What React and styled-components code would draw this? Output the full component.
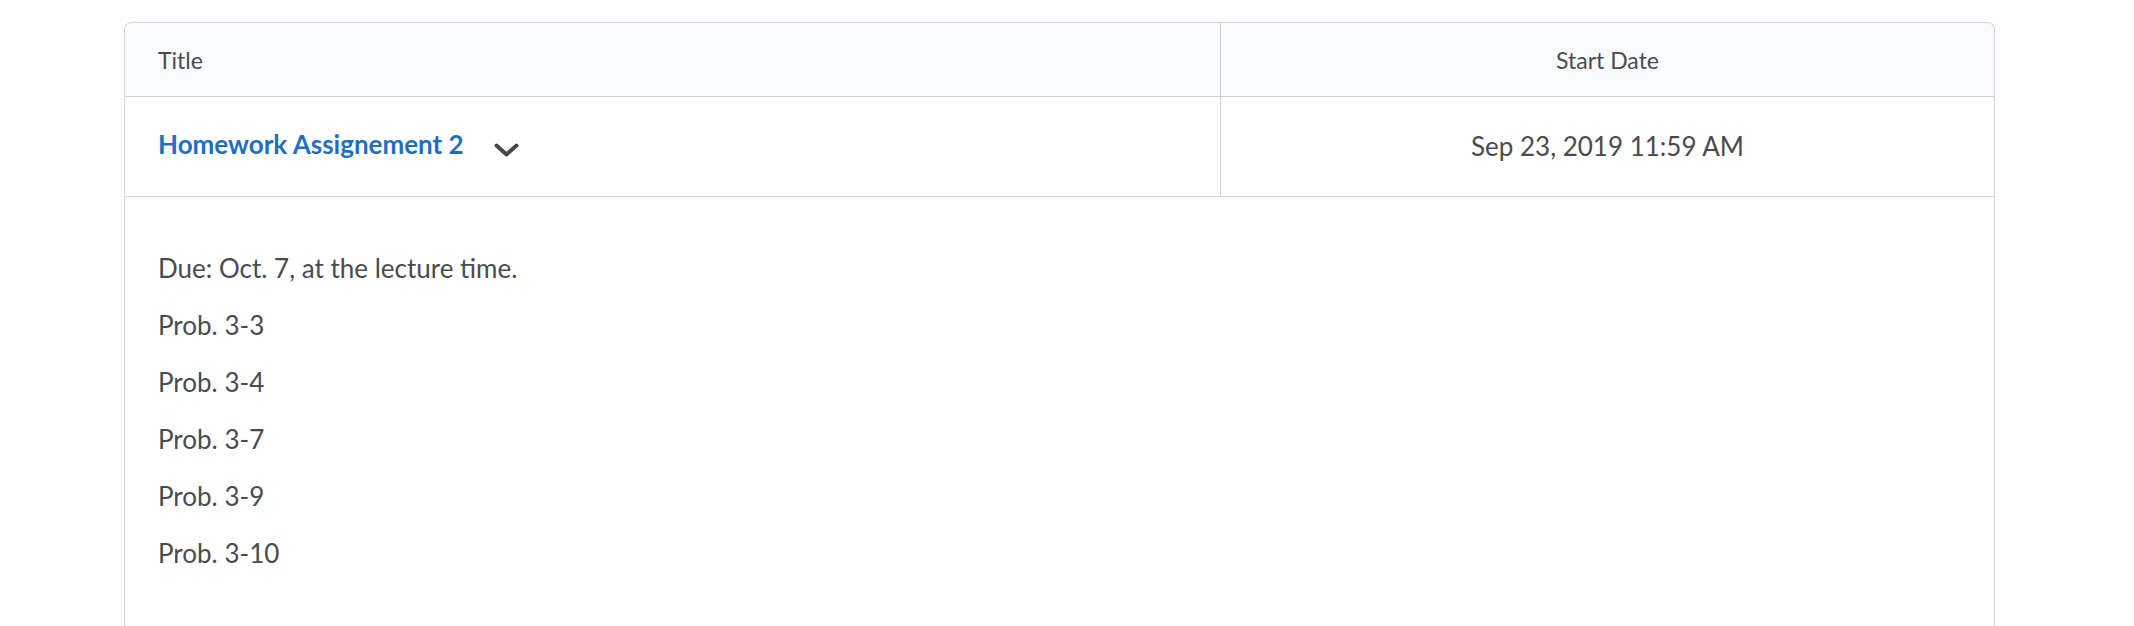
import React from "react";
import styled, { createGlobalStyle } from "styled-components";

const GlobalStyle = createGlobalStyle`
  html, body {
    margin: 0;
    padding: 0;
    background: #ffffff;
  }
  body {
    font-family: Lato, "Noto Sans", "Liberation Sans", sans-serif;
    color: #494c4e;
  }
`;

const Page = styled.div`
  padding: 22px 139px 0 124px;
`;

const Table = styled.div`
  border: 1px solid #cdd4db;
  border-bottom: none;
  border-radius: 8px 8px 0 0;
  overflow: hidden;
  display: grid;
  grid-template-columns: 1096px 1fr;
`;

const HeadCell = styled.div`
  background: #f9fbff;
  height: 73px;
  display: flex;
  align-items: center;
  justify-content: ${(p) => (p.$center ? "center" : "flex-start")};
  padding: 0 ${(p) => (p.$center ? "0" : "33px")};
  font-size: 23px;
  line-height: 28px;
  color: #494c4e;
  border-bottom: 1px solid #cdd4db;
  border-right: ${(p) => (p.$divider ? "1px solid #cdd4db" : "none")};
`;

const BodyCell = styled.div`
  height: 100px;
  box-sizing: border-box;
  padding-bottom: ${(p) => (p.$center ? "1px" : "4px")};
  display: flex;
  align-items: center;
  justify-content: ${(p) => (p.$center ? "center" : "flex-start")};
  padding-left: ${(p) => (p.$center ? "0" : "33px")};
  font-size: 26px;
  color: #494c4e;
  border-bottom: 1px solid #cdd4db;
  border-right: ${(p) => (p.$divider ? "1px solid #cdd4db" : "none")};
`;

const TitleLink = styled.a`
  color: #1f6fbf;
  font-weight: 700;
  font-size: 26px;
  text-decoration: none;
  margin-top: -2px;
`;

const ToggleButton = styled.button`
  border: none;
  background: transparent;
  padding: 0;
  margin-left: 30px;
  display: flex;
  align-items: center;
  cursor: pointer;
  margin-top: 10px;
`;

const Details = styled.div`
  grid-column: 1 / -1;
  padding: 53px 33px 60px;
  min-height: 380px;
`;

const Para = styled.p`
  margin: 0 0 21px;
  font-size: 26px;
  line-height: 36px;
  color: #494c4e;
`;

const Chevron = () => (
  <svg width="25" height="14" viewBox="0 0 25 14" aria-hidden="true">
    <path
      d="M2.5 2.5 L12.5 11.5 L22.5 2.5"
      fill="none"
      stroke="#45484a"
      strokeWidth="4"
      strokeLinecap="round"
      strokeLinejoin="round"
    />
  </svg>
);

const lines = [
  "Due: Oct. 7, at the lecture time.",
  "Prob. 3-3",
  "Prob. 3-4",
  "Prob. 3-7",
  "Prob. 3-9",
  "Prob. 3-10",
];

export default function App() {
  return (
    <>
      <GlobalStyle />
      <Page>
        <Table>
          <HeadCell $divider>Title</HeadCell>
          <HeadCell $center>Start Date</HeadCell>
          <BodyCell $divider>
            <TitleLink href="#">Homework Assignement 2</TitleLink>
            <ToggleButton aria-label="Toggle details">
              <Chevron />
            </ToggleButton>
          </BodyCell>
          <BodyCell $center>Sep 23, 2019 11:59 AM</BodyCell>
          <Details>
            {lines.map((l) => (
              <Para key={l}>{l}</Para>
            ))}
          </Details>
        </Table>
      </Page>
    </>
  );
}
